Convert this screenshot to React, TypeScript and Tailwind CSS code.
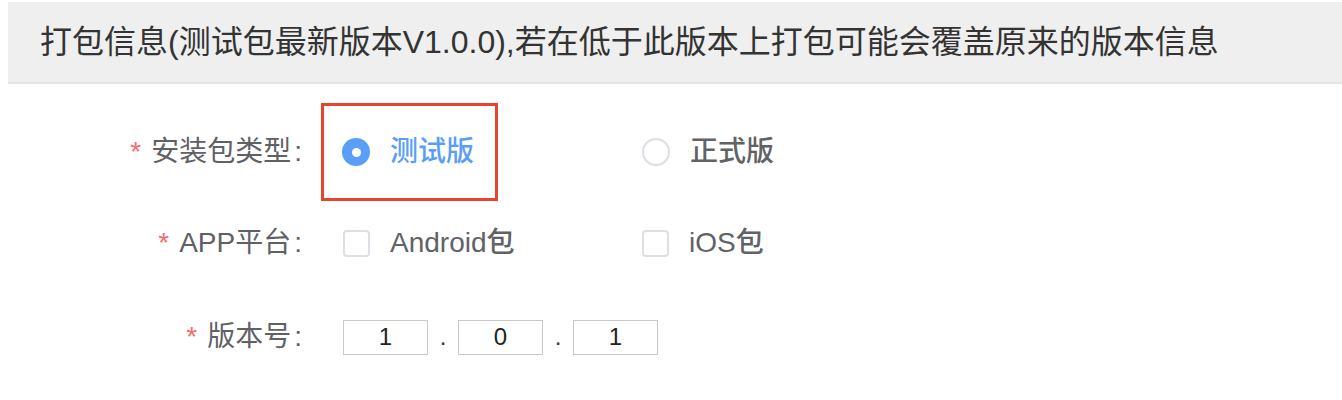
import { useState } from "react";

const font = "font-['Liberation_Sans','Noto_Sans_CJK_SC',sans-serif]";

function Label({ text }: { text: string }) {
  return (
    <div className="w-[302px] shrink-0 text-right text-[28px] text-[#5f6166]">
      <span className="mr-[10px] text-[#f56c6c]">*</span>
      {text}
      <span className="ml-[3px]">:</span>
    </div>
  );
}

function Radio({ checked }: { checked: boolean }) {
  return checked ? (
    <span className="flex h-[28px] w-[28px] items-center justify-center rounded-full bg-[#5a9ef8]">
      <span className="h-[9px] w-[9px] rounded-full bg-white" />
    </span>
  ) : (
    <span className="h-[28px] w-[28px] rounded-full border-2 border-[#dcdfe6] bg-white" />
  );
}

function Checkbox() {
  return (
    <span className="h-[27px] w-[27px] rounded-[4px] border-2 border-[#dcdfe6] bg-white" />
  );
}

export default function App() {
  const [version, setVersion] = useState(["1", "0", "1"]);

  return (
    <div className={`min-h-[400px] bg-white ${font}`}>
      {/* 标题栏 */}
      <div className="ml-2 mt-[2px] flex h-[82px] items-center border-b-2 border-[#e4e4e4] bg-[#efefef] pl-[32px] text-[32px] text-[#333]">
        打包信息(测试包最新版本V1.0.0),若在低于此版本上打包可能会覆盖原来的版本信息
      </div>

      {/* 安装包类型 */}
      <div className="mt-[19px] flex h-[98px] items-center">
        <Label text="安装包类型" />
        <div className="ml-[19px] flex h-[98px] w-[177px] items-center gap-[20px] border-[3px] border-[#e8432d] pl-[18px]">
          <Radio checked />
          <span className="text-[28px] font-medium text-[#5a9ef8]">测试版</span>
        </div>
        <div className="ml-[144px] flex items-center gap-[20px]">
          <Radio checked={false} />
          <span className="text-[28px] font-medium text-[#606266]">正式版</span>
        </div>
      </div>

      {/* APP平台 */}
      <div className="mt-[17px] flex h-[50px] items-center">
        <Label text="APP平台" />
        <div className="ml-[41px] flex w-[299px] items-center gap-[20px]">
          <Checkbox />
          <span className="text-[28px] font-medium text-[#606266]">Android包</span>
        </div>
        <div className="flex items-center gap-[20px]">
          <Checkbox />
          <span className="text-[28px] font-medium text-[#606266]">iOS包</span>
        </div>
      </div>

      {/* 版本号 */}
      <div className="mt-[44px] flex h-[50px] items-center">
        <Label text="版本号" />
        <div className="ml-[41px] flex items-center">
          {version.map((v, i) => (
            <div key={i} className="flex items-center">
              {i > 0 && (
                <span className="w-[30px] text-center text-[24px] text-[#333]">.</span>
              )}
              <input
                value={v}
                onChange={(e) => {
                  const next = [...version];
                  next[i] = e.target.value;
                  setVersion(next);
                }}
                className="h-[35px] w-[85px] border border-[#c8c8c8] text-center text-[24px] text-[#222] outline-none"
              />
            </div>
          ))}
        </div>
      </div>
    </div>
  );
}
